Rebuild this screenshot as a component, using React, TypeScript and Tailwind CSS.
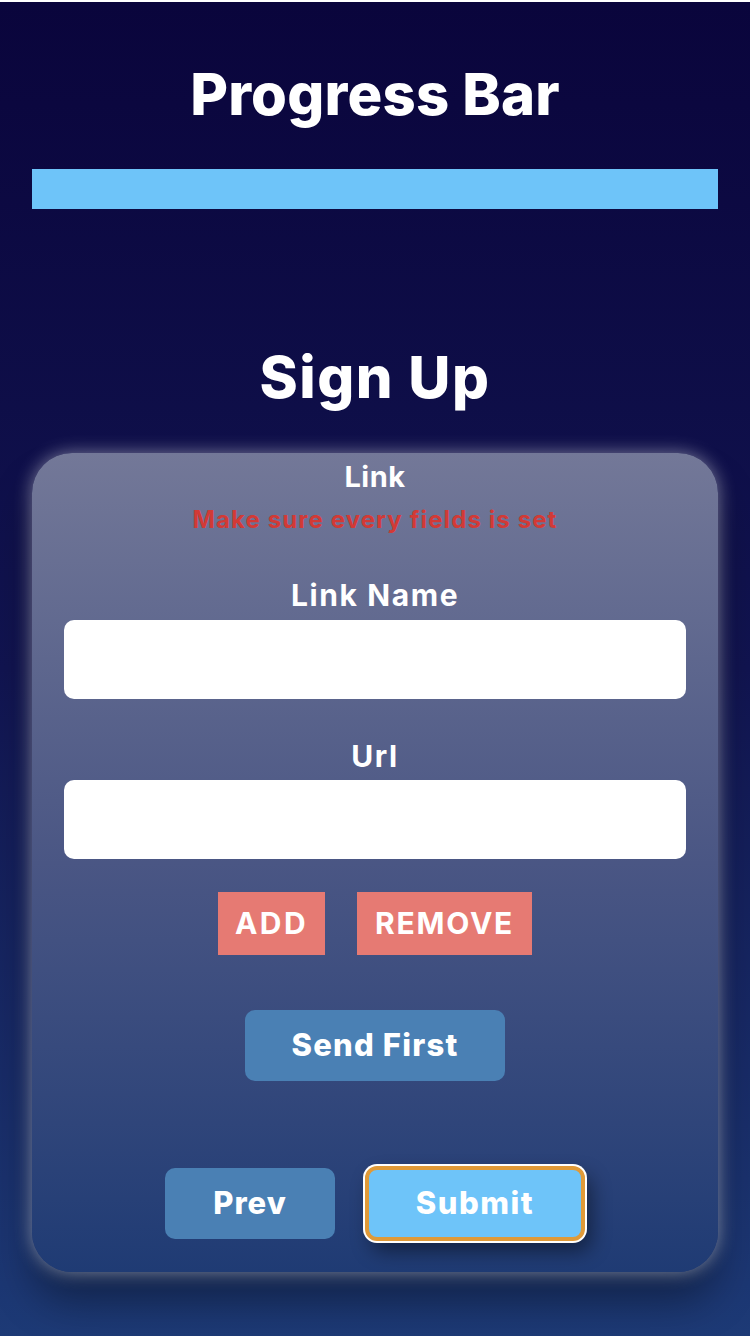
import { useState } from "react";

export default function App() {
  const [linkName, setLinkName] = useState("");
  const [url, setUrl] = useState("");

  return (
    <div
      className="min-h-[1336px] border-t-2 border-white bg-gradient-to-b from-[#0a053c] via-[#111450] to-[#1d3a76] flex flex-col items-center"
      style={{ fontFamily: "Inter, 'Liberation Sans', sans-serif" }}
    >
      <h1 className="mt-[60px] text-[58px] leading-[64px] font-extrabold text-white tracking-[0.2px]">Progress Bar</h1>
      <div className="mt-[43px] w-[686px] h-[40px] bg-[#6ec4f9]" />

      <h2 className="mt-[137px] text-[58px] leading-[62px] font-extrabold text-white tracking-[1.5px]">Sign Up</h2>

      <div className="mt-[45px] w-[686px] h-[819px] rounded-[40px] bg-gradient-to-b from-[#737898] via-[#4a5684] to-[#1f3b74] shadow-[0_0_18px_rgba(255,255,255,0.45),0_30px_40px_rgba(0,0,0,0.35)] flex flex-col items-center pt-[6px]">
        <div className="text-[29px] leading-[36px] font-bold text-white tracking-[0.5px]">Link</div>
        <div className="mt-[10px] text-[24px] leading-[30px] font-bold text-[#d23a36] tracking-[1.1px]">Make sure every fields is set</div>

        <label className="mt-[42px] text-[30px] leading-[36px] font-bold text-white tracking-[1.6px]">Link Name</label>
        <input
          value={linkName}
          onChange={(e) => setLinkName(e.target.value)}
          className="mt-[7px] w-[622px] h-[79px] rounded-[10px] bg-white outline-none px-4 text-xl"
        />

        <label className="mt-[39px] text-[30px] leading-[36px] font-bold text-white tracking-[1.6px]">Url</label>
        <input
          value={url}
          onChange={(e) => setUrl(e.target.value)}
          className="mt-[6px] w-[622px] h-[79px] rounded-[10px] bg-white outline-none px-4 text-xl"
        />

        <div className="mt-[33px] flex gap-[32px]">
          <button className="w-[107px] h-[63px] bg-[#e67a73] text-white text-[30px] font-bold tracking-[2.5px]">ADD</button>
          <button className="w-[175px] h-[63px] bg-[#e67a73] text-white text-[30px] font-bold tracking-[1.8px]">REMOVE</button>
        </div>

        <button className="mt-[55px] w-[260px] h-[71px] rounded-[10px] bg-[#4a80b4] text-white text-[31px] font-extrabold tracking-[1.2px]">
          Send First
        </button>

        <div className="mt-[85px] flex items-center gap-[30px]">
          <button className="w-[170px] h-[71px] rounded-[10px] bg-[#4a80b4] text-white text-[31px] font-extrabold tracking-[1px]">Prev</button>
          <button className="w-[220px] h-[75px] rounded-[12px] bg-[#6ec4f9] border-[4px] border-[#e09a38] ring-2 ring-white text-white text-[31px] font-extrabold tracking-[1.5px] shadow-[6px_10px_20px_rgba(0,0,0,0.45)]">
            Submit
          </button>
        </div>
      </div>
    </div>
  );
}
